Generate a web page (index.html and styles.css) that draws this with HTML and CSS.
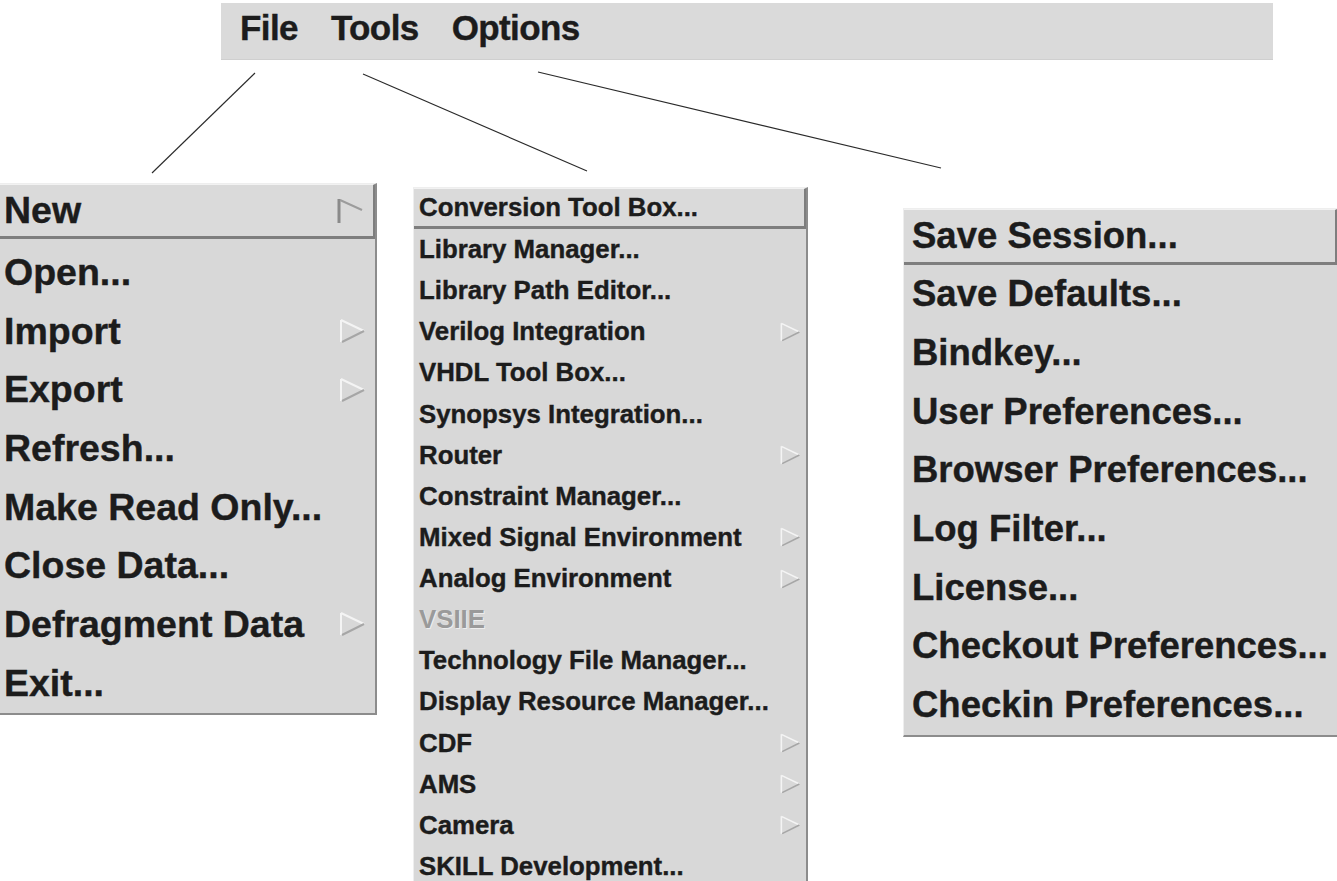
FILE: index.html
```html
<!DOCTYPE html>
<html>
<head>
<meta charset="utf-8">
<link rel="stylesheet" href="styles.css">
</head>
<body>
<div class="page">
  <div class="menubar">
    <span class="mb-item">File</span>
    <span class="mb-item">Tools</span>
    <span class="mb-item">Options</span>
  </div>

  <svg class="connectors" width="1337" height="881" viewBox="0 0 1337 881">
    <line x1="255" y1="73" x2="152" y2="173"/>
    <line x1="363" y1="74" x2="587" y2="171"/>
    <line x1="538" y1="72" x2="941" y2="168"/>
  </svg>

  <div class="menus">
    <div class="menu menu-file">
      <div class="item active"><span>New</span><svg class="arrow" viewBox="0 0 28 28"><path class="a-dark" d="M3 2 V26"/><path class="a-mid" d="M4 3 L26 13"/></svg></div>
      <div class="list">
        <div class="item"><span>Open...</span></div>
        <div class="item"><span>Import</span><svg class="arrow" viewBox="0 0 28 28"><path class="a-light" d="M3 3 V25 M3 3 L26 14"/><path class="a-shade" d="M4 25 L26 14"/></svg></div>
        <div class="item"><span>Export</span><svg class="arrow" viewBox="0 0 28 28"><path class="a-light" d="M3 3 V25 M3 3 L26 14"/><path class="a-shade" d="M4 25 L26 14"/></svg></div>
        <div class="item"><span>Refresh...</span></div>
        <div class="item"><span>Make Read Only...</span></div>
        <div class="item"><span>Close Data...</span></div>
        <div class="item"><span>Defragment Data</span><svg class="arrow" viewBox="0 0 28 28"><path class="a-light" d="M3 3 V25 M3 3 L26 14"/><path class="a-shade" d="M4 25 L26 14"/></svg></div>
        <div class="item"><span>Exit...</span></div>
      </div>
    </div>

    <div class="menu menu-tools">
      <div class="item active"><span>Conversion Tool Box...</span></div>
      <div class="list">
        <div class="item"><span>Library Manager...</span></div>
        <div class="item"><span>Library Path Editor...</span></div>
        <div class="item"><span>Verilog Integration</span><svg class="arrow" viewBox="0 0 28 28"><path class="a-light" d="M3 3 V25 M3 3 L26 14"/><path class="a-shade" d="M4 25 L26 14"/></svg></div>
        <div class="item"><span>VHDL Tool Box...</span></div>
        <div class="item"><span>Synopsys Integration...</span></div>
        <div class="item"><span>Router</span><svg class="arrow" viewBox="0 0 28 28"><path class="a-light" d="M3 3 V25 M3 3 L26 14"/><path class="a-shade" d="M4 25 L26 14"/></svg></div>
        <div class="item"><span>Constraint Manager...</span></div>
        <div class="item"><span>Mixed Signal Environment</span><svg class="arrow" viewBox="0 0 28 28"><path class="a-light" d="M3 3 V25 M3 3 L26 14"/><path class="a-shade" d="M4 25 L26 14"/></svg></div>
        <div class="item"><span>Analog Environment</span><svg class="arrow" viewBox="0 0 28 28"><path class="a-light" d="M3 3 V25 M3 3 L26 14"/><path class="a-shade" d="M4 25 L26 14"/></svg></div>
        <div class="item disabled"><span>VSIIE</span></div>
        <div class="item"><span>Technology File Manager...</span></div>
        <div class="item"><span>Display Resource Manager...</span></div>
        <div class="item"><span>CDF</span><svg class="arrow" viewBox="0 0 28 28"><path class="a-light" d="M3 3 V25 M3 3 L26 14"/><path class="a-shade" d="M4 25 L26 14"/></svg></div>
        <div class="item"><span>AMS</span><svg class="arrow" viewBox="0 0 28 28"><path class="a-light" d="M3 3 V25 M3 3 L26 14"/><path class="a-shade" d="M4 25 L26 14"/></svg></div>
        <div class="item"><span>Camera</span><svg class="arrow" viewBox="0 0 28 28"><path class="a-light" d="M3 3 V25 M3 3 L26 14"/><path class="a-shade" d="M4 25 L26 14"/></svg></div>
        <div class="item"><span>SKILL Development...</span></div>
      </div>
    </div>

    <div class="menu menu-options">
      <div class="item active"><span>Save Session...</span></div>
      <div class="list">
        <div class="item"><span>Save Defaults...</span></div>
        <div class="item"><span>Bindkey...</span></div>
        <div class="item"><span>User Preferences...</span></div>
        <div class="item"><span>Browser Preferences...</span></div>
        <div class="item"><span>Log Filter...</span></div>
        <div class="item"><span>License...</span></div>
        <div class="item"><span>Checkout Preferences...</span></div>
        <div class="item"><span>Checkin Preferences...</span></div>
      </div>
    </div>
  </div>
</div>
</body>
</html>
```

FILE: styles.css
```css
* { box-sizing: border-box; }

html, body {
  margin: 0;
  padding: 0;
  background: #ffffff;
}

.page {
  position: relative;
  width: 1337px;
  height: 881px;
  overflow: hidden;
  font-family: "Liberation Sans", Arial, sans-serif;
  font-weight: bold;
  color: #1c1c1c;
  -webkit-text-stroke: 0.4px #1c1c1c;
}

.menubar {
  margin: 3px 0 0 221px;
  width: 1052px;
  height: 57px;
  background: #dadada;
  border-bottom: 1px solid #cfcfcf;
  display: flex;
  align-items: center;
  gap: 33px;
  padding: 0 0 6px 19px;
  font-size: 35px;
  letter-spacing: -0.6px;
}

.connectors {
  position: absolute;
  left: 0;
  top: 0;
  pointer-events: none;
}
.connectors line {
  stroke: #2a2a2a;
  stroke-width: 1.1;
}

.menus {
  display: flex;
  align-items: flex-start;
}

.menu {
  background: #d8d8d8;
  border-top: 1px solid #eeeeee;
  border-left: 1px solid #eeeeee;
  border-right: 2px solid #8c8c8c;
  border-bottom: 2px solid #8c8c8c;
  display: flex;
  flex-direction: column;
}

.item {
  display: flex;
  align-items: center;
  justify-content: space-between;
  white-space: nowrap;
}

.item.active {
  background: #dadada;
  border-bottom: 3px solid #7e7e7e;
  border-right: 2px solid #7e7e7e;
  border-top: 1px solid #f2f2f2;
}

.item.disabled span {
  color: #9a9a9a;
  -webkit-text-stroke: 0;
  text-shadow: 1px 1px 0 #ededed;
}

.arrow {
  flex: none;
}
.arrow path {
  fill: none;
  stroke-width: 2;
}
.a-light { stroke: #f4f4f4; }
.a-shade { stroke: #a6a6a6; }
.a-dark { stroke: #8a8a8a; stroke-width: 3 !important; }
.a-mid { stroke: #9c9c9c; }

/* File menu */
.menu-file {
  width: 377px;
  margin-top: 123px;
  font-size: 37.5px;
  border-left: none;
}
.menu-file .item {
  height: 58.7px;
  padding: 0 9px 0 4px;
}
.menu-file .item.active {
  height: 55px;
}
.menu-file .list {
  padding-top: 4px;
}
.menu-file .arrow {
  width: 28px;
  height: 28px;
}

/* Tools menu */
.menu-tools {
  width: 395px;
  margin-left: 36px;
  margin-top: 127px;
  font-size: 25.8px;
  border-bottom: none;
}
.menu-tools .item {
  height: 41.13px;
  padding: 0 5px 0 5px;
}
.menu-tools .item.active {
  height: 41px;
}
.menu-tools .arrow {
  width: 22px;
  height: 22px;
}

/* Options menu */
.menu-options {
  width: 434px;
  margin-left: 95px;
  margin-top: 148px;
  font-size: 36.5px;
  border-right: none;
}
.menu-options .item {
  height: 58.7px;
  padding: 0 8px 0 8px;
}
.menu-options .item.active {
  height: 56px;
  border-right: 2px solid #7e7e7e;
}
```
